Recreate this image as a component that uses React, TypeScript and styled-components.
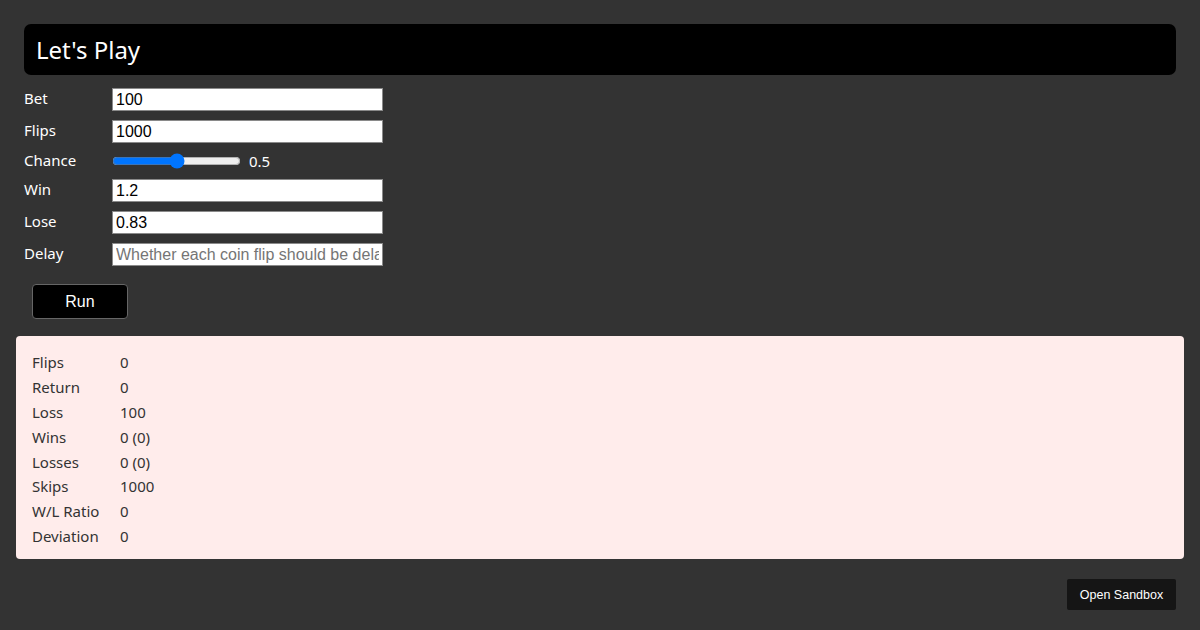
import React from "react";
import styled, { createGlobalStyle } from "styled-components";

const Global = createGlobalStyle`
  html, body { margin: 0; padding: 0; background: #333333; }
  body { font-family: "Noto Sans", "Open Sans", sans-serif; color: #ffffff; }
  * { box-sizing: border-box; }
`;

const Page = styled.div`
  padding: 24px 16px 20px;
  display: flex;
  flex-direction: column;
  min-height: 630px;
`;

const Form = styled.div`
  padding: 0 8px;
`;

const Header = styled.div`
  background: #000;
  border-radius: 7px;
  height: 51px;
  display: flex;
  align-items: center;
  padding: 0 12px;
  margin-bottom: 13px;
`;

const Title = styled.h1`
  margin: 0;
  font-weight: 400;
  font-size: 24px;
  color: #fff;
`;

const Rows = styled.div`
  display: flex;
  flex-direction: column;
  gap: 9px;
`;

const Row = styled.div`
  display: flex;
  align-items: center;
`;

const Label = styled.span`
  width: 88px;
  font-size: 15px;
  line-height: 18px;
  color: #fff;
  margin-top: -3px;
`;

const TextInput = styled.input`
  width: 271px;
  height: 23px;
  border: 1px solid #8a8a8a;
  padding: 1px 3px;
  font-family: "Liberation Sans", Arial, sans-serif;
  font-size: 16px;
  color: #000;
  background: #fff;
  outline: none;
  &::placeholder { color: #757575; }
`;

const Range = styled.input`
  width: 129px;
  margin: 0;
  height: 18px;
`;

const RangeValue = styled.span`
  margin-left: 8px;
  font-size: 15px;
  line-height: 18px;
`;

const RunButton = styled.button`
  margin: 18px 0 0 8px;
  width: 96px;
  height: 35px;
  background: #000;
  color: #fff;
  border: 1px solid #666;
  border-radius: 4px;
  font-family: "Liberation Sans", Arial, sans-serif;
  font-size: 16px;
`;

const Results = styled.div`
  margin-top: 17px;
  background: #ffeceb;
  border-radius: 4px;
  padding: 14px 16px 11px;
  color: #333;
`;

const ResultRow = styled.div`
  display: flex;
  height: 24.8px;
  align-items: center;
  font-size: 15px;
`;

const ResultLabel = styled.span`
  width: 88px;
`;

const Footer = styled.div`
  display: flex;
  justify-content: flex-end;
  margin-top: 20px;
  padding-right: 8px;
`;

const SandboxButton = styled.button`
  background: #151515;
  color: #fff;
  border: none;
  border-radius: 2px;
  width: 109px;
  height: 31px;
  font-family: "Liberation Sans", Arial, sans-serif;
  font-size: 12.5px;
`;

const results: [string, string][] = [
  ["Flips", "0"],
  ["Return", "0"],
  ["Loss", "100"],
  ["Wins", "0 (0)"],
  ["Losses", "0 (0)"],
  ["Skips", "1000"],
  ["W/L Ratio", "0"],
  ["Deviation", "0"],
];

export default function App() {
  return (
    <Page>
      <Global />
      <Form>
        <Header>
          <Title>Let's Play</Title>
        </Header>
        <Rows>
          <Row>
            <Label>Bet</Label>
            <TextInput defaultValue="100" />
          </Row>
          <Row>
            <Label>Flips</Label>
            <TextInput defaultValue="1000" />
          </Row>
          <Row>
            <Label>Chance</Label>
            <Range type="range" min={0} max={1} step={0.01} defaultValue={0.5} />
            <RangeValue>0.5</RangeValue>
          </Row>
          <Row>
            <Label>Win</Label>
            <TextInput defaultValue="1.2" />
          </Row>
          <Row>
            <Label>Lose</Label>
            <TextInput defaultValue="0.83" />
          </Row>
          <Row>
            <Label>Delay</Label>
            <TextInput placeholder="Whether each coin flip should be delayed" />
          </Row>
        </Rows>
        <RunButton>Run</RunButton>
      </Form>
      <Results>
        {results.map(([k, v]) => (
          <ResultRow key={k}>
            <ResultLabel>{k}</ResultLabel>
            <span>{v}</span>
          </ResultRow>
        ))}
      </Results>
      <Footer>
        <SandboxButton>Open Sandbox</SandboxButton>
      </Footer>
    </Page>
  );
}
